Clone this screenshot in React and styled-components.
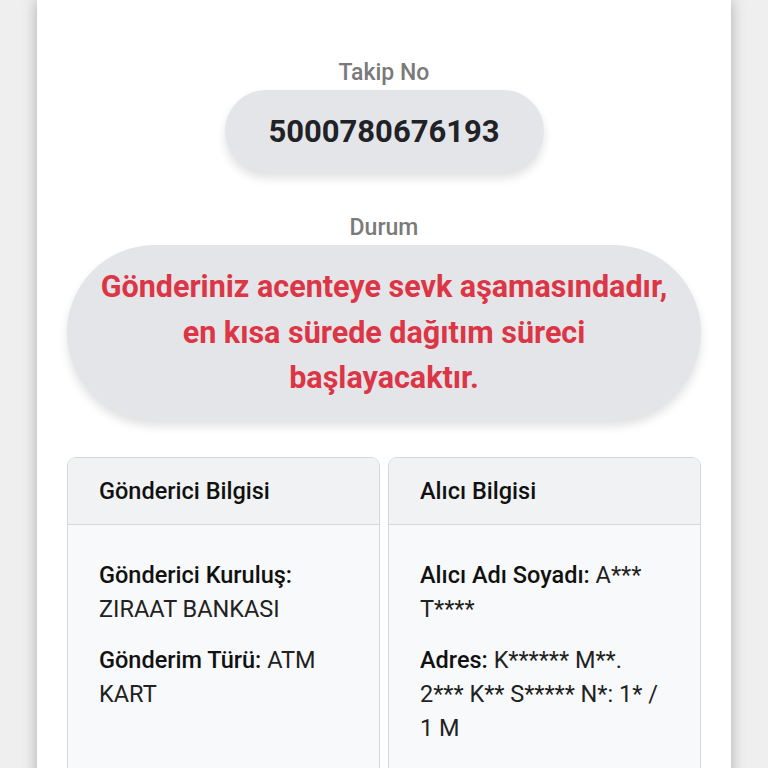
import React from "react";
import styled, { createGlobalStyle } from "styled-components";

const Global = createGlobalStyle`
  html, body { margin: 0; padding: 0; background: #efefef; }
  body { font-family: Roboto, "Noto Sans", "Liberation Sans", sans-serif; }
`;

const Page = styled.div`
  height: 768px;
  overflow: hidden;
  display: flex;
  justify-content: center;
  align-items: flex-start;
  background: #efefef;
`;

const Panel = styled.main`
  width: 694px;
  min-height: 900px;
  flex-shrink: 0;
  background: #fff;
  box-shadow: 0 0 14px rgba(0, 0, 0, 0.28);
  padding: 57px 30px 0 30px;
  box-sizing: border-box;
  display: flex;
  flex-direction: column;
  align-items: center;
`;

const Label = styled.div`
  font-size: 23px;
  font-weight: 500;
  color: #7a7a7a;
  line-height: 32px;
  margin-bottom: 1px;
  flex-shrink: 0;
`;

const Pill = styled.div`
  flex-shrink: 0;
  background: #e4e5e8;
  border-radius: 999px;
  box-shadow: 0 6px 10px rgba(0, 0, 0, 0.12);
  display: flex;
  align-items: center;
  justify-content: center;
  text-align: center;
  box-sizing: border-box;
  width: ${(p) => p.$w};
  height: ${(p) => p.$h};
  padding: 0 28px;
  margin-bottom: ${(p) => p.$mb || "0"};
`;

const Number = styled.div`
  font-size: 31px;
  font-weight: 700;
  color: #212226;
`;

const Status = styled.div`
  font-size: 30.5px;
  font-weight: 700;
  color: #dc3545;
  line-height: 45.5px;
`;

const Cards = styled.div`
  flex-shrink: 0;
  align-self: stretch;
  display: grid;
  grid-template-columns: 1fr 1fr;
  gap: 8px;
`;

const Card = styled.section`
  border: 1px solid #d5d7da;
  border-radius: 9px;
  background: #f8f9fa;
  overflow: hidden;
  height: 360px;
`;

const CardHeader = styled.div`
  background: #f1f2f4;
  border-bottom: 1.5px solid #d5d7da;
  height: 66px;
  padding: 0 31px;
  display: flex;
  align-items: center;
  font-size: 23.5px;
  font-weight: 500;
  color: #111;
`;

const CardBody = styled.div`
  padding: 33px 31px;
  display: flex;
  flex-direction: column;
  gap: 17px;
`;

const Field = styled.p`
  margin: 0;
  font-size: 23.5px;
  line-height: 34px;
  color: #222;
  b { font-weight: 500; color: #111; }
`;

export default function App() {
  return (
    <>
      <Global />
      <Page>
        <Panel>
          <Label>Takip No</Label>
          <Pill $w="319px" $h="82px" $mb="40px">
            <Number>5000780676193</Number>
          </Pill>
          <Label>Durum</Label>
          <Pill $w="100%" $h="175px" $mb="37px">
            <Status>
              Gönderiniz acenteye sevk aşamasındadır, en kısa sürede dağıtım süreci başlayacaktır.
            </Status>
          </Pill>
          <Cards>
            <Card>
              <CardHeader>Gönderici Bilgisi</CardHeader>
              <CardBody>
                <Field>
                  <b>Gönderici Kuruluş:</b> ZIRAAT BANKASI
                </Field>
                <Field>
                  <b>Gönderim Türü:</b> ATM KART
                </Field>
              </CardBody>
            </Card>
            <Card>
              <CardHeader>Alıcı Bilgisi</CardHeader>
              <CardBody>
                <Field>
                  <b>Alıcı Adı Soyadı:</b> A*** T****
                </Field>
                <Field>
                  <b>Adres:</b> K****** M**. 2*** K** S***** N*: 1* / 1 M
                </Field>
              </CardBody>
            </Card>
          </Cards>
        </Panel>
      </Page>
    </>
  );
}
